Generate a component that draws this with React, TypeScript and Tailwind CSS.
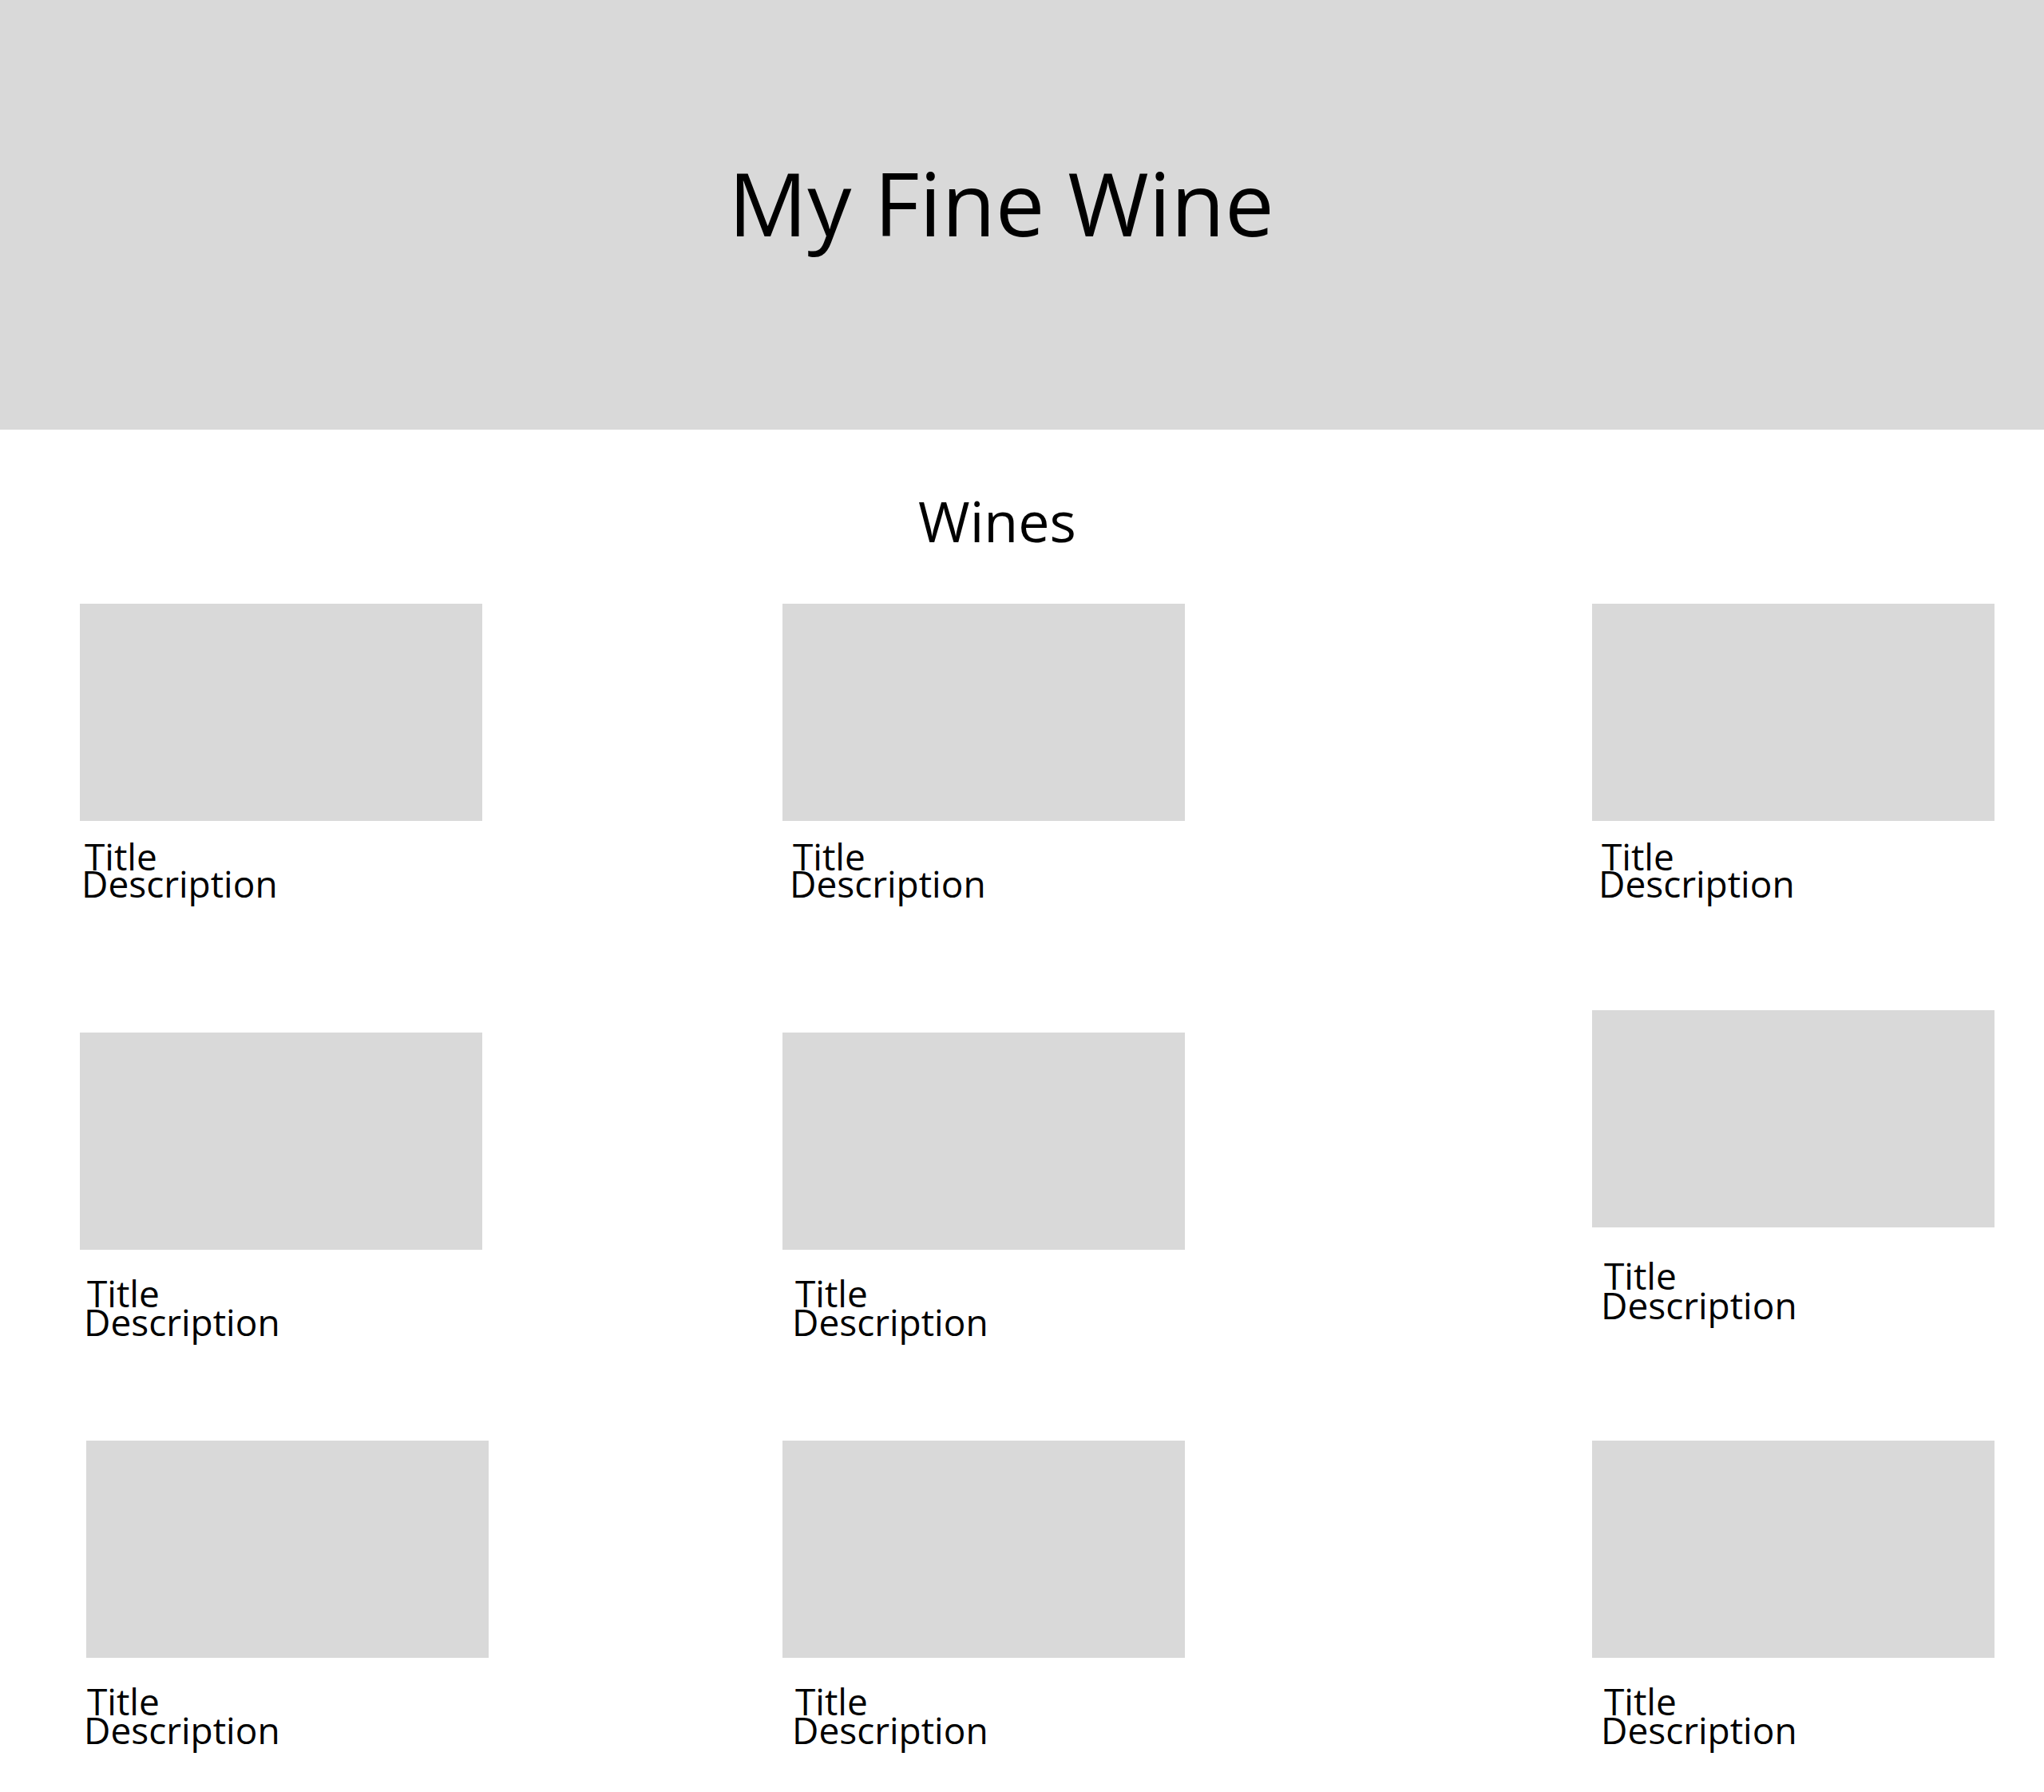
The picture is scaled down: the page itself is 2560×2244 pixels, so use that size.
import React from "react";

type CardProps = {
  className?: string;
  textClass?: string;
};

function WineCard({ className = "", textClass = "" }: CardProps) {
  return (
    <div className={`w-[504px] shrink-0 ${className}`}>
      <div className="h-[272px] bg-[#d9d9d9]" />
      <div className={`text-[46px] whitespace-nowrap ${textClass}`}>
        <p className="pl-[4px]">Title</p>
        <p>Description</p>
      </div>
    </div>
  );
}

export default function App() {
  return (
    <div className="min-h-screen bg-white text-black font-['Open_Sans',sans-serif]">
      <header className="h-[538px] bg-[#d9d9d9] flex justify-center pt-[198px]">
        <h1 className="text-[110px] leading-[110px] font-normal pr-[52px]">
          My Fine Wine
        </h1>
      </header>

      <main className="pb-[60px]">
        <h2 className="mt-[79px] flex justify-center text-[70px] leading-[70px] font-normal">
          <span className="pr-[62px]">Wines</span>
        </h2>

        {/* row 1 */}
        <div className="flex items-start pl-[100px] mt-[69px]">
          <WineCard textClass="mt-[27px] ml-[2px] leading-[34px]" />
          <WineCard className="ml-[376px]" textClass="mt-[27px] ml-[9px] leading-[34px]" />
          <WineCard className="ml-[510px]" textClass="mt-[27px] ml-[8px] leading-[34px]" />
        </div>

        {/* row 2 */}
        <div className="flex items-start pl-[100px] mt-[142px]">
          <WineCard className="mt-[28px]" textClass="mt-[36px] ml-[5px] leading-[36px]" />
          <WineCard className="ml-[376px] mt-[28px]" textClass="mt-[36px] ml-[12px] leading-[36px]" />
          <WineCard className="ml-[510px]" textClass="mt-[42px] ml-[11px] leading-[37px]" />
        </div>

        {/* row 3 */}
        <div className="flex items-start pl-[100px] mt-[131px]">
          <WineCard className="ml-[8px]" textClass="mt-[36px] -ml-[3px] leading-[36px]" />
          <WineCard className="ml-[368px]" textClass="mt-[36px] ml-[12px] leading-[36px]" />
          <WineCard className="ml-[510px]" textClass="mt-[36px] ml-[11px] leading-[36px]" />
        </div>
      </main>
    </div>
  );
}
